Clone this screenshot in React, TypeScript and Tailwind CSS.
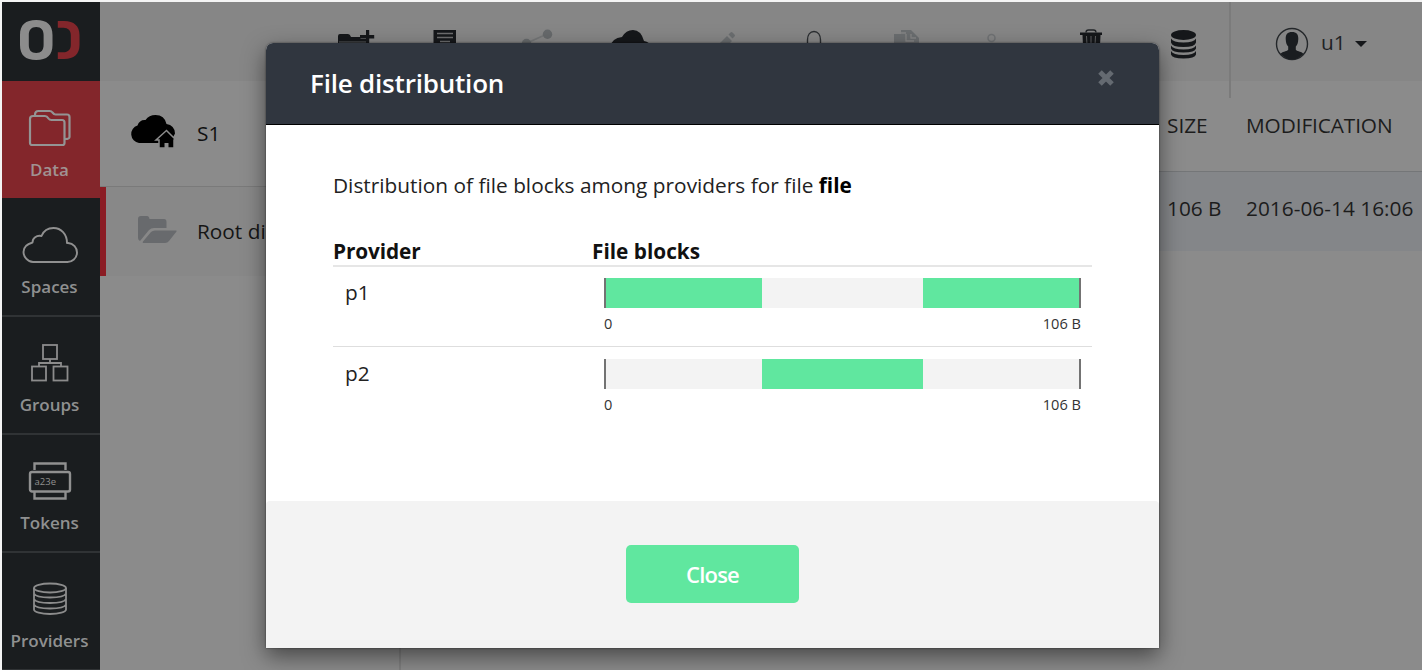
import type { ReactNode } from "react";

function DataIcon() {
  return (
    <svg width="44" height="40" viewBox="0 0 44 40" fill="none" stroke="#949494" strokeWidth="2.200" strokeLinejoin="round">
      <path d="M2 10a3 3 0 0 1 3-3h12q2 0 3.500 2.500q1 1.500 3 1.500h10.500a2.500 2.500 0 0 1 2.500 2.500V34a2 2 0 0 1-2 2H4a2 2 0 0 1-2-2Z" />
      <path d="M7 6q0-4 3.500-4h11q2 0 3 1.500q1.500 2 3 2h11.500a2.500 2.500 0 0 1 2.500 2.500v20q0 2-4.500 2" />
    </svg>
  );
}

function CloudIcon() {
  return (
    <svg width="58" height="38" viewBox="0 0 58 38" fill="none" stroke="#909090" strokeWidth="1.900" strokeLinejoin="round">
      <path d="M12 36h34a9.500 9.500 0 0 0 1-19h-1C46 8 40 2 32.500 2c-5.500 0-10 3-12 8-5-1-9 2-9 6.500C6 18 2.500 21.500 2.500 26s4 10 9.500 10Z" />
    </svg>
  );
}

function GroupsIcon() {
  return (
    <svg width="38" height="38" viewBox="0 0 38 38" fill="none" stroke="#8c8c8c" strokeWidth="1.800">
      <rect x="12" y="1" width="14" height="14" />
      <rect x="1" y="22.500" width="14" height="14" />
      <rect x="22.500" y="22.500" width="14" height="14" />
      <path d="M19 15v4M8 22v-3h22v3" />
    </svg>
  );
}

function TokensIcon() {
  return (
    <svg width="44" height="40" viewBox="0 0 44 40" fill="none" stroke="#909090" strokeWidth="2.400">
      <path d="M6.500 9V2.500h31V9M6.500 31v6.500h31V31" />
      <rect x="2" y="11" width="40" height="19.500" rx="2" />
      <text x="6.500" y="23.500" fill="#909090" stroke="none" fontSize="9.500" fontFamily="Open Sans, sans-serif">a23e</text>
    </svg>
  );
}

function ProvidersIcon() {
  return (
    <svg width="36" height="34" viewBox="0 0 36 34" fill="none" stroke="#8c8c8c" strokeWidth="1.800">
      <ellipse cx="18" cy="6" rx="16" ry="4.500" />
      <path d="M2 6v21.500c0 2.500 7 4.500 16 4.500s16-2 16-4.500V6M2 11.500c1 2.500 8 4 16 4s15-1.500 16-4M2 17c1 2.500 8 4 16 4s15-1.500 16-4M2 22.500c1 2.500 8 4 16 4s15-1.500 16-4" />
    </svg>
  );
}

function NavItem({ icon, label, active }: { icon: ReactNode; label: string; active?: boolean }) {
  return (
    <div className={active
      ? "flex h-[118px] shrink-0 flex-col items-center border-b border-[#1a1d1f] bg-[#83262b] pt-[28px] text-[#a09292]"
      : "flex h-[118px] shrink-0 flex-col items-center border-b-2 border-[#303335] pt-[26px] text-[#8f9090]"}>
      <div className="flex h-10 w-full items-center justify-center pr-[2px]">{icon}</div>
      <div className={active
        ? "mt-[9px] pr-[3px] text-[17px] font-semibold leading-[24px] whitespace-nowrap"
        : "mt-[10px] pr-[3px] text-[17px] font-semibold leading-[24px] whitespace-nowrap"}>{label}</div>
    </div>
  );
}

function Sidebar() {
  return (
    <nav className="flex h-[668px] w-[98px] shrink-0 flex-col overflow-hidden bg-[#1a1d1f]">
      <div className="h-[79px] shrink-0">
        <svg width="98" height="79" viewBox="2 2 98 79" fill="none">
          <path fillRule="evenodd" fill="#8c8c8c" d="M36.200 20C47 20 52.500 25 52.500 35v10c0 10-5.500 15-16.300 15S20 55 20 45V35c0-10 5.500-15 16.200-15ZM36.200 27c-5 0-7.400 3-7.400 8v10c0 5 2.400 8 7.400 8s7.400-3 7.400-8V35c0-5-2.400-8-7.400-8Z" />
          <path fill="#83262b" d="M57.800 21h6.500C74 21 79.500 26 79.500 35v10c0 9-5.500 14-15.200 14h-6.500v-6.700h5.500c5 0 7.500-3 7.500-7.300V35c0-4.300-2.500-7.300-7.500-7.300h-5.500Z" />
        </svg>
      </div>
      <NavItem icon={<DataIcon />} label="Data" active />
      <NavItem icon={<CloudIcon />} label="Spaces" />
      <NavItem icon={<GroupsIcon />} label="Groups" />
      <NavItem icon={<TokensIcon />} label="Tokens" />
      <NavItem icon={<ProvidersIcon />} label="Providers" />
    </nav>
  );
}

function Toolbar() {
  return (
    <header className="flex h-[79px] shrink-0 bg-[#868686]">
      <svg className="shrink-0" width="1129" height="79" viewBox="100 2 1129 79" fill="none">
        <g fill="#15171a">
          <path d="M338 60V36q0-2 2-2h8q2 0 3 3h9.500v2H369v21Z" />
          <path d="M339 41h27v2h-27Z" fill="#3a3c3e" />
          <path d="M366 30h3.200v5h5v3.400h-5V43H366v-4.600h-6V35h6Z" />
          <path d="M433.500 30H456v28h-22.500Z" />
          <path d="M437 33.500h16M437 37.500h16M440 41.500h10" stroke="#6d6e6f" strokeWidth="1.300" />
          <path d="M610 47q2-9 12-10q4-7 11-7q8 0 11 11q6 1 7 6Z" />
        </g>
        <g fill="#66696b">
          <path d="M527 43L547 34" stroke="#747677" strokeWidth="1.500" />
          <circle cx="526.500" cy="43.500" r="4.700" /><circle cx="547.500" cy="34.200" r="4.700" />
        </g>
        <g fill="#6b6e70">
          <path d="M719 44l8-8 5 5-8 8ZM728.500 34.500l2-2q1-1 2 0l2 2q1 1 0 2l-2 2Z" />
          <path d="M894 34h7v-4h10l8 8v9h-25Z" />
          <path d="M901 33h5M906 34v7h8M911 34v4h5" stroke="#858585" strokeWidth="1.300" />
        </g>
        <path d="M807.500 48v-8c0-5 2.500-8.500 6.500-8.500s6.500 3.500 6.500 8.500v8" stroke="#2a2d30" strokeWidth="1.400" />
        <circle cx="991.500" cy="38" r="3.500" stroke="#707274" strokeWidth="1.500" />
        <g fill="#15171a">
          <path d="M1080 32.500h22v2.500h-1.500l-1 22h-16l-1-22H1080Z" />
          <path d="M1086 32.500q0-2.500 2.500-2.500h5q2.500 0 2.500 2.500" fill="none" stroke="#222528" strokeWidth="1.300" />
          <path d="M1086.500 36l.5 9M1091 36v9M1095.500 36l-.5 9" stroke="#606162" strokeWidth="1" />
          <ellipse cx="1183.500" cy="35" rx="12.500" ry="5" />
          <path d="M1171 38.500q2 4 12.500 4t12.500-4v4q-1 4.500-12.500 4.500t-12.500-4.500ZM1171 45.500q2 4 12.500 4t12.500-4v3q-1 4-12.500 4t-12.500-4ZM1171 51q2 4 12.500 4t12.500-4v3.500q-1 4-12.500 4t-12.500-4Z" />
        </g>
      </svg>
      <div className="flex h-[96px] flex-1 items-start border-l-2 border-[#7b7b7b] pl-[44px] pt-[25px]">
        <svg width="34" height="34" viewBox="0 0 34 34">
          <circle cx="17" cy="17" r="15.500" fill="none" stroke="#24272a" strokeWidth="1.400" />
          <path d="M17 5c4.500 0 6.500 2.500 6.300 7-.2 4-1 6-2.500 7.500v3.200c2 2 6.200 1.800 7.700 4.300Q23 32.500 17 32.500T5.500 27c1.500-2.500 5.700-2.300 7.700-4.300v-3.200c-1.500-1.500-2.300-3.500-2.500-7.500C10.500 7.500 12.500 5 17 5Z" fill="#1a1d20" />
        </svg>
        <span className="ml-[12px] text-[20.8px] leading-[30px] text-[#202225]">u1</span>
        <svg className="ml-[9px] mt-[14px]" width="12" height="6" viewBox="0 0 12 6"><path d="M0 0h12L6 6Z" fill="#15171a" /></svg>
      </div>
    </header>
  );
}

function SpacePanel() {
  return (
    <aside className="h-full w-[301px] shrink-0 border-r-2 border-[#7e7e7e]">
      <div className="flex h-[106px] items-center border-b border-[#7a7a7a] pl-[30px]">
        <svg className="mb-[3px]" width="46" height="36" viewBox="0 0 46 36">
          <path d="M9 29a9 9 0 0 1-1.500-17.500q2-6 8-5.500Q19 1 25.500 1q9 0 11 9 8 1 8.500 9.500L40 29Z" fill="#000" />
          <path d="M36.500 16.500L26 26h3v8h15v-8h2Z" fill="#000" stroke="#8b8b8b" strokeWidth="1.500" />
          <path d="M34.500 34v-5h4v5Z" fill="#8b8b8b" />
        </svg>
        <span className="mb-[2px] ml-[21px] text-[20.8px] leading-[28px] text-[#101010]">S1</span>
      </div>
      <div className="flex h-[89px] items-center border-l-6 border-[#8b1c24] bg-[#888888] pl-[32px]">
        <svg width="39" height="28" viewBox="0 0 39 28" fill="#686a6d" className="mb-[4px] shrink-0">
          <path d="M0 3q0-3 3-3h6q2 0 2.500 3H26q2.500 0 2.500 3v6H16q-3 0-5 2L2 25q-2-1-2-3Z" />
          <path d="M17 14.500h21q1 0 .5 1L31 25q-1.500 2-4 2H6q-2 0-1-1.500L13 16q1.500-1.500 4-1.500Z" />
        </svg>
        <span className="mb-[2px] ml-[20px] text-[20.8px] leading-[28px] whitespace-nowrap text-[#151515]">Root directory</span>
      </div>
    </aside>
  );
}

function FileList() {
  return (
    <section className="flex flex-1 flex-col text-[20.8px] leading-[28px] whitespace-nowrap text-[#1c1c1c]">
      <div className="flex h-[91px] items-center border-b border-[#747678] pb-[3px] pl-[766px]">
        <span className="w-[79px]">SIZE</span>
        <span className="tracking-[-0.1px]">MODIFICATION</span>
      </div>
      <div className="flex h-[79px] items-center bg-[#848689] pb-[8px] pl-[766px]">
        <span className="w-[79px]">106 B</span>
        <span className="tracking-[0.03px]">2016-06-14 16:06</span>
      </div>
    </section>
  );
}

const rows = [
  { name: "p1", filled: [true, false, true] },
  { name: "p2", filled: [false, true, false] },
];

function Dialog() {
  return (
    <div className="absolute left-[266px] top-[43px] flex h-[605px] w-[893px] flex-col overflow-hidden rounded-t-[7px] bg-white shadow-[0_8px_22px_rgba(0,0,0,0.5),0_0_2px_rgba(0,0,0,0.6)]">
      <div className="flex h-[82px] shrink-0 items-start justify-between border-b border-black bg-[#30363f] pl-[44px] pr-[45px]">
        <h1 className="mt-[22px] text-[26px] font-semibold leading-[36px] tracking-[-0.2px] text-white">File distribution</h1>
        <svg className="mt-[27px]" width="16" height="16" viewBox="0 0 16 16" stroke="#646a71" strokeWidth="5">
          <path d="M2 2l12 12M14 2L2 14" />
        </svg>
      </div>
      <div className="flex-1 px-[67px] pt-[46px] text-[20.8px] leading-[28px] text-[#222]">
        <p className="tracking-[0.02px] whitespace-nowrap">Distribution of file blocks among providers for file <b className="text-black">file</b></p>
        <div className="mt-[38px] flex h-[30px] border-b-2 border-[#e6e6e6] font-bold text-[#111]">
          <span className="w-[259px] tracking-[-0.1px]">Provider</span>
          <span>File blocks</span>
        </div>
        {rows.map((row, i) => (
          <div key={row.name} className={i === 0 ? "flex h-[80px] border-b border-[#dedede] pl-[12px] pt-[11px]" : "flex h-[81px] pl-[12px] pt-[12px]"}>
            <span className="w-[259px]">{row.name}</span>
            <div className="w-[477px]">
              <div className="flex h-[30px] border-x-2 border-[#737373] bg-[#f3f3f3]">
                {row.filled.map((f, j) => <div key={j} className={`${j === 1 ? "w-[161px]" : "w-[156px]"} ${f ? "bg-[#60e79f]" : ""}`} />)}
              </div>
              <div className="mt-[5px] flex justify-between text-[14.6px] leading-[20px] text-[#333]">
                <span>0</span>
                <span>106 B</span>
              </div>
            </div>
          </div>
        ))}
      </div>
      <div className="flex h-[147px] shrink-0 justify-center rounded-t-[4px] bg-[#f3f3f3] pt-[44px]">
        <button className="h-[58px] w-[173px] rounded-[5px] bg-[#60e79f] text-[22px] font-semibold leading-[30px] tracking-[-0.8px] text-white">Close</button>
      </div>
    </div>
  );
}

export default function App() {
  return (
    <div className="relative h-[670px] w-[1422px] overflow-hidden bg-[#f4f4f4] pl-[2px] pt-[2px] font-['Open_Sans',sans-serif]">
      <div className="flex h-full">
        <Sidebar />
        <main className="flex min-w-0 flex-1 flex-col bg-[#8b8b8b]">
          <Toolbar />
          <div className="flex flex-1">
            <SpacePanel />
            <FileList />
          </div>
        </main>
      </div>
      <Dialog />
    </div>
  );
}
